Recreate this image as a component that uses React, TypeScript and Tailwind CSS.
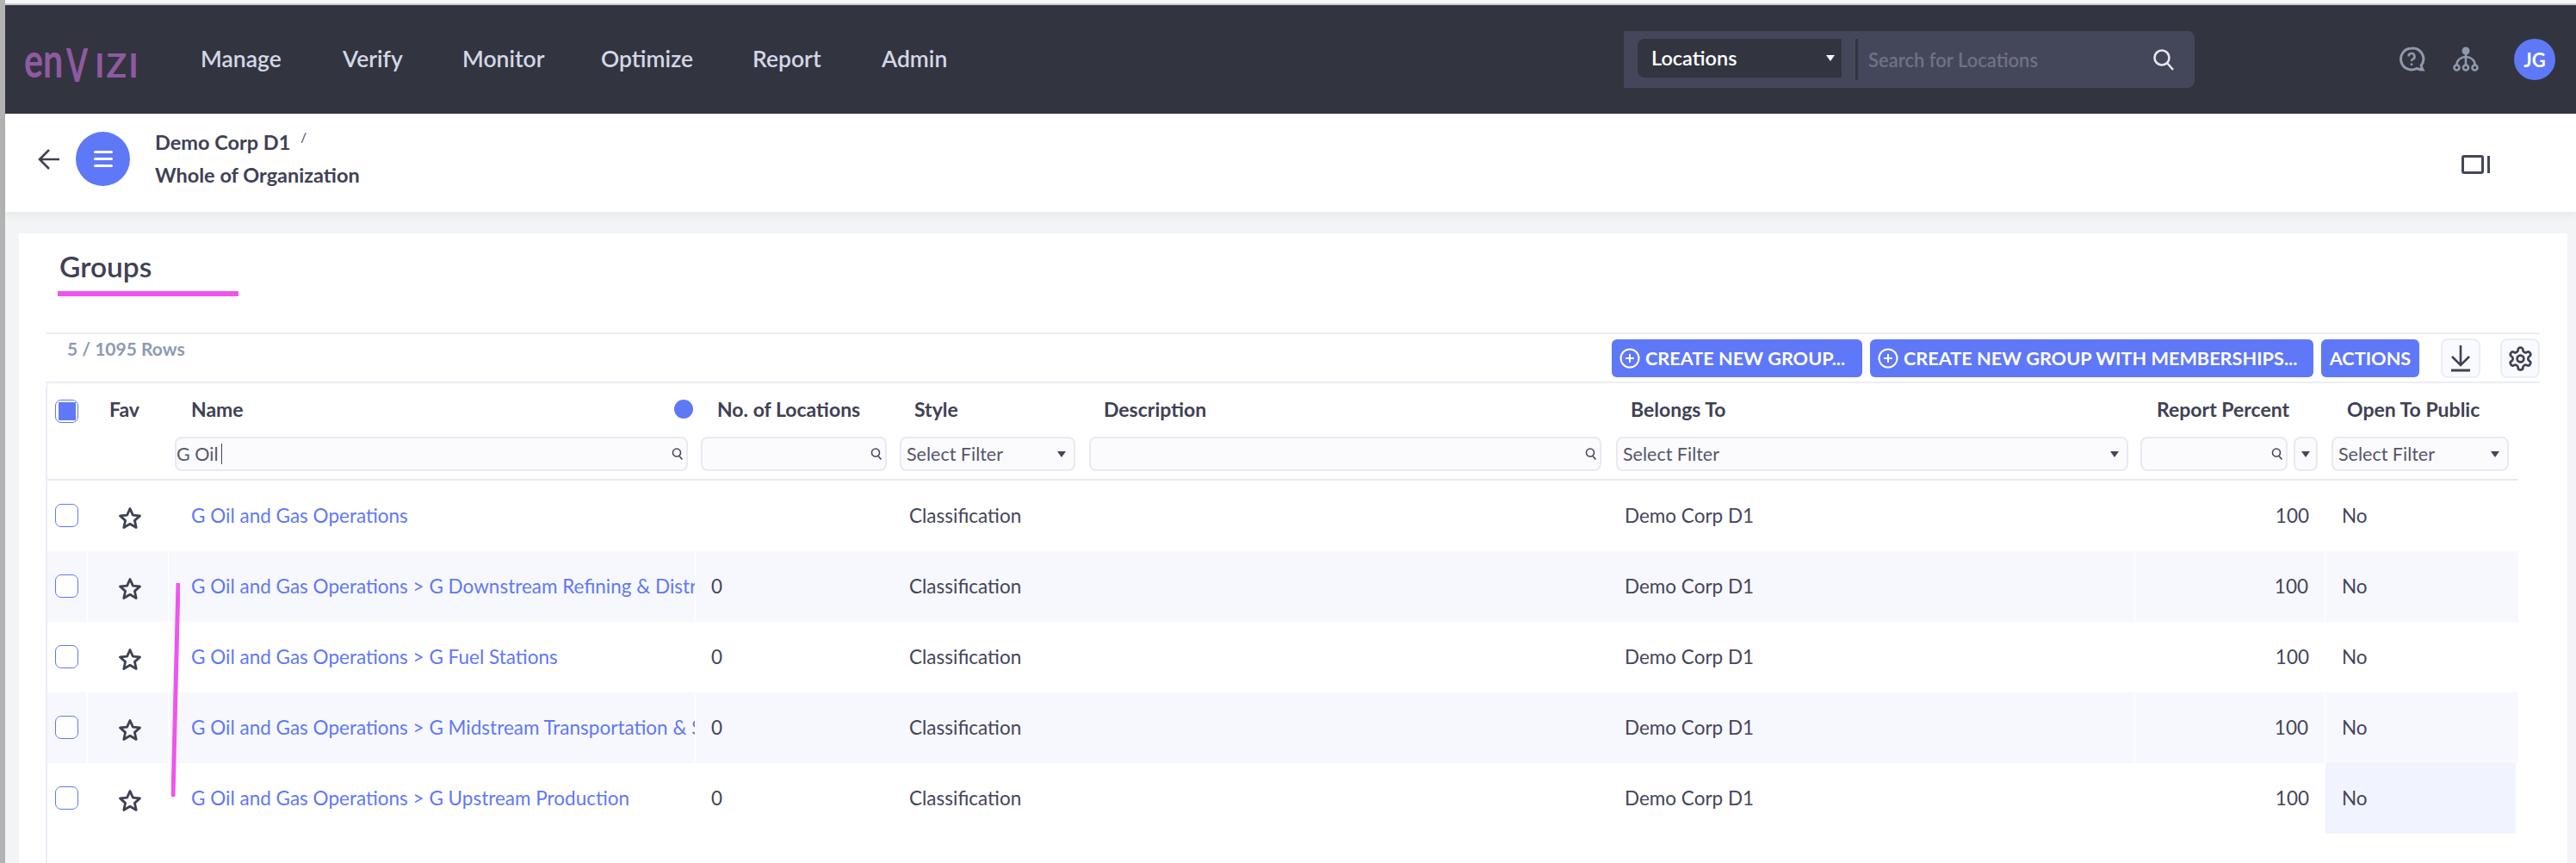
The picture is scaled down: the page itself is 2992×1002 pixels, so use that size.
const gridCols =
  "grid grid-cols-[47px_94px_612px_229px_219px_612px_612px_221px_221px]";

const rows = [
  { name: "G Oil and Gas Operations", locations: "" },
  { name: "G Oil and Gas Operations > G Downstream Refining & Distribution", locations: "0" },
  { name: "G Oil and Gas Operations > G Fuel Stations", locations: "0" },
  { name: "G Oil and Gas Operations > G Midstream Transportation & Storage", locations: "0" },
  { name: "G Oil and Gas Operations > G Upstream Production", locations: "0" },
];

const navItems = [
  { label: "Manage", className: "w-[165px]" },
  { label: "Verify", className: "w-[139px]" },
  { label: "Monitor", className: "w-[161px]" },
  { label: "Optimize", className: "w-[176px]" },
  { label: "Report", className: "w-[150px]" },
  { label: "Admin", className: "w-[80px]" },
];

const MiniSearch = () => (
  <svg width="14" height="16" viewBox="0 0 14 16" fill="none" stroke="#44465a" strokeWidth="1.6">
    <circle cx="6" cy="6.5" r="4.5" />
    <path d="M9 10.5l3.5 4" />
  </svg>
);

const Caret = ({ className = "border-t-[#44465a]" }: { className?: string }) => (
  <span className={`w-0 h-0 border-x-[5px] border-x-transparent border-t-[7px] ${className}`} />
);

const TextFilter = ({ value, className }: { value?: string; className: string }) => (
  <div className={`h-[40px] rounded-lg border-2 border-[#e8e9f3] bg-[#fbfbfe] flex items-center justify-between pr-[3px] ${className}`}>
    <span className="text-[21.5px] text-[#55576a] flex items-center">
      {value}
      {value ? <span className="w-px h-[24px] bg-[#44465a] ml-[4px]" /> : null}
    </span>
    <MiniSearch />
  </div>
);

const SelectFilter = ({ className }: { className: string }) => (
  <div className={`h-[40px] rounded-lg border-2 border-[#e8e9f3] bg-[#fbfbfe] flex items-center justify-between pl-[6px] pr-[9px] ${className}`}>
    <span className="text-[21.5px] text-[#55576a]">Select Filter</span>
    <Caret />
  </div>
);

const Checkbox = ({ checked }: { checked?: boolean }) => (
  <span className={`w-[27px] h-[27px] rounded-[7px] border-[1.5px] border-[#5f78f7] bg-white flex items-center justify-center ${checked ? "mt-[4px]" : "mb-[2px]"}`}>
    {checked ? <span className="w-[20px] h-[21px] bg-[#5f78f7]" /> : null}
  </span>
);

const Star = () => (
  <svg className="mt-[5px]" width="28" height="27" viewBox="0 0 28 27" fill="none" stroke="#3f4154" strokeWidth="2.8" strokeLinejoin="round">
    <path d="M14 2.5l3.4 7.6 8.1.8-6.1 5.5 1.8 8.1L14 20.3l-7.2 4.2 1.8-8.1-6.1-5.5 8.1-.8z" />
  </svg>
);

const PlusCircle = () => (
  <svg width="24" height="24" viewBox="0 0 24 24" fill="none" stroke="white" strokeWidth="2">
    <circle cx="12" cy="12" r="10.5" />
    <path d="M12 7v10M7 12h10" />
  </svg>
);

const Logo = () => (
  <div className="w-[205px] flex items-baseline text-[#8f5aa0] font-bold leading-none">
    <span className="w-[49px] text-[55px] scale-x-[0.75] origin-left">en</span>
    <span className="w-[33px] text-[53px] scale-x-[0.68] origin-left translate-y-[5px]">V</span>
    <span className="text-[39px] tracking-[2px]">IZI</span>
  </div>
);

export default function App() {
  return (
    <div className="w-[2992px] h-[1002px] overflow-hidden flex bg-[#f3f4f6] font-['Lato',sans-serif]">
      <div className="w-[6px] bg-[#b3b3b3]" />
      <div className="flex-1 flex flex-col min-w-0">
        <div className="h-[4px] bg-[#f6f6f8]" />
        <div className="h-[2px] bg-[#c9c9cc]" />

        <header className="h-[126px] bg-[#32343f] flex items-center pl-[22px] pr-[20px]">
          <Logo />
          <nav className="flex items-center text-[#d3d7e6] text-[26.5px] font-semibold">
            {navItems.map((item) => (
              <span key={item.label} className={item.className}>
                {item.label}
              </span>
            ))}
          </nav>
          <div className="ml-[782px] w-[663px] h-[66px] bg-[#444759] rounded-r-lg flex items-center pl-[16px] pr-[23px]">
            <div className="w-[237px] h-[45px] mb-[3px] bg-[#32343f] rounded-l-lg flex items-center justify-between pl-[16px] pr-[8px] text-white text-[23.5px] font-semibold">
              Locations
              <Caret className="border-t-white" />
            </div>
            <div className="w-[3px] h-[48px] bg-[#32343f] ml-[16px]" />
            <span className="ml-[12px] text-[22px] font-semibold text-[#6f7284]">Search for Locations</span>
            <svg className="ml-auto" width="26" height="26" viewBox="0 0 26 26" fill="none" stroke="#e4e6f0" strokeWidth="2.6">
              <circle cx="11" cy="11" r="8.5" />
              <path d="M17 17l7 8" />
            </svg>
          </div>
          <svg className="ml-[238px]" width="30" height="31" viewBox="0 0 30 31" fill="none" stroke="#8f99ad" strokeWidth="3">
            <path d="M14 2a12.5 12.5 0 1 0 6 23.5c2 .8 4.5 1.5 7 1.5-1-1.5-1.5-3-1.8-5A12.5 12.5 0 0 0 14 2z" />
            <path d="M10.5 11.5a3.5 3.5 0 1 1 5 3.2c-1 .6-1.5 1.1-1.5 2.3M14 19.5v2.5" strokeWidth="2.6" />
          </svg>
          <svg className="ml-[32px]" width="30" height="30" viewBox="0 0 30 30" fill="none" stroke="#8f99ad" strokeWidth="2.6">
            <circle cx="15" cy="5" r="4.5" fill="#8f99ad" stroke="none" />
            <path d="M15 8v13M4.5 21a10.5 9 0 0 1 21 0" />
            <circle cx="4.5" cy="24.5" r="3" />
            <circle cx="15" cy="24.5" r="3" />
            <circle cx="25.5" cy="24.5" r="3" />
          </svg>
          <div className="ml-[41px] w-[48px] h-[48px] rounded-full bg-[#5f78f7] flex items-center justify-center text-white text-[22px] font-bold">
            JG
          </div>
        </header>

        <div className="h-[114px] bg-white flex items-center pl-[38px] pr-[100px] pb-[9px] shadow-[0_4px_10px_rgba(0,0,0,0.05)] z-10">
          <svg width="26" height="26" viewBox="0 0 26 26" fill="none" stroke="#3f4154" strokeWidth="2.6">
            <path d="M25 13H3M13 2L2 13l11 11" />
          </svg>
          <div className="ml-[18px] w-[63px] h-[63px] rounded-full bg-[#5f78f7] flex flex-col items-center justify-center gap-[5px]">
            <span className="w-[22px] h-[3px] bg-white rounded" />
            <span className="w-[22px] h-[3px] bg-white rounded" />
            <span className="w-[22px] h-[3px] bg-white rounded" />
          </div>
          <div className="ml-[29px] flex flex-col gap-[3px] text-[#3f4154] text-[23.5px] font-bold">
            <div className="flex">
              Demo Corp D1
              <span className="ml-[12px] text-[15px] font-normal">/</span>
            </div>
            <div>Whole of Organization</div>
          </div>
          <div className="ml-auto mt-[13px] flex items-center gap-[4px]">
            <span className="w-[26px] h-[22px] rounded-[3px] border-[3px] border-[#44465a]" />
            <span className="w-[3px] h-[20px] bg-[#44465a]" />
          </div>
        </div>

        <main className="mt-[25px] ml-[16px] mr-[10px] flex-1 min-h-0 bg-white flex flex-col">
          <div className="pt-[16px] pl-[47px] text-[#3f4154] text-[33.5px] font-semibold leading-[44px]">Groups</div>
          <div className="ml-[45px] mt-[7px] w-[210px] h-[6px] bg-[#ee55f0]" />

          <div className="ml-[31px] mr-[32px] mt-[42px] h-[59px] border-y-2 border-[#eceef5] flex items-start justify-between">
            <span className="ml-[25px] mt-[1px] text-[21px] font-bold text-[#8d9ab3]">5 / 1095 Rows</span>
            <div className="flex items-center gap-[9px] mt-[5px]">
              <button className="h-[44px] w-[291px] rounded-md bg-[#5f78f7] text-white text-[21.7px] font-bold flex items-center gap-[6px] pl-[9px] whitespace-nowrap">
                <PlusCircle />
                CREATE NEW GROUP...
              </button>
              <button className="h-[44px] w-[515px] rounded-md bg-[#5f78f7] text-white text-[21.7px] font-bold flex items-center gap-[6px] pl-[9px] whitespace-nowrap">
                <PlusCircle />
                CREATE NEW GROUP WITH MEMBERSHIPS...
              </button>
              <button className="h-[44px] w-[114px] rounded-md bg-[#5f78f7] text-white text-[21.7px] font-bold">
                ACTIONS
              </button>
              <button className="ml-[16px] w-[46px] h-[46px] rounded-lg border-2 border-[#eceef5] bg-[#f9faff] flex items-center justify-center">
                <svg width="24" height="32" viewBox="0 0 24 32" fill="none" stroke="#3f4154" strokeWidth="2.6">
                  <path d="M12 1v23M2 14l10 10 10-10" />
                  <path d="M1 30h22" strokeWidth="3" />
                </svg>
              </button>
              <button className="ml-[14px] w-[46px] h-[46px] rounded-lg border-2 border-[#eceef5] bg-[#f9faff] flex items-center justify-center">
                <svg width="31" height="31" viewBox="0 0 24 24" fill="none" stroke="#3f4154" strokeWidth="2.1" strokeLinejoin="round">
                  <path d="M12.22 2h-.44a2 2 0 0 0-2 2v.18a2 2 0 0 1-1 1.73l-.43.25a2 2 0 0 1-2 0l-.15-.08a2 2 0 0 0-2.73.73l-.22.38a2 2 0 0 0 .73 2.73l.15.1a2 2 0 0 1 1 1.72v.51a2 2 0 0 1-1 1.74l-.15.09a2 2 0 0 0-.73 2.73l.22.38a2 2 0 0 0 2.73.73l.15-.08a2 2 0 0 1 2 0l.43.25a2 2 0 0 1 1 1.73V20a2 2 0 0 0 2 2h.44a2 2 0 0 0 2-2v-.18a2 2 0 0 1 1-1.73l.43-.25a2 2 0 0 1 2 0l.15.08a2 2 0 0 0 2.73-.73l.22-.39a2 2 0 0 0-.73-2.73l-.15-.08a2 2 0 0 1-1-1.74v-.5a2 2 0 0 1 1-1.74l.15-.09a2 2 0 0 0 .73-2.73l-.22-.38a2 2 0 0 0-2.73-.73l-.15.08a2 2 0 0 1-2 0l-.43-.25a2 2 0 0 1-1-1.73V4a2 2 0 0 0-2-2z" />
                  <circle cx="12" cy="12" r="3" />
                </svg>
              </button>
            </div>
          </div>

          <div className="ml-[31px] mr-[57px] flex-1 border-l-2 border-[#eceef5] rounded-tl-lg -mt-[2px] relative">
            <div className="border-b-2 border-[#e8e9f3] h-[115px]">
              <div className={`${gridCols} h-[64px] items-center text-[23px] font-bold text-[#3f4154]`}>
                <span className="pl-[9px]"><Checkbox checked /></span>
                <span className="pl-[25px]">Fav</span>
                <span className="pl-[26px] flex items-center justify-between pr-[3px]">
                  Name
                  <span className="w-[22px] h-[22px] rounded-full bg-[#5f78f7]" />
                </span>
                <span className="pl-[25px]">No. of Locations</span>
                <span className="pl-[25px]">Style</span>
                <span className="pl-[26px]">Description</span>
                <span className="pl-[26px]">Belongs To</span>
                <span className="pl-[25px]">Report Percent</span>
                <span className="pl-[25px]">Open To Public</span>
              </div>
              <div className={`${gridCols} items-center`}>
                <span />
                <span />
                <span className="pl-[7px] pr-[9px]"><TextFilter value="G Oil" className="w-full" /></span>
                <span className="pl-[6px] pr-[7px]"><TextFilter className="w-full" /></span>
                <span className="pl-[8px] pr-[7px]"><SelectFilter className="w-full" /></span>
                <span className="pl-[9px] pr-[8px]"><TextFilter className="w-full" /></span>
                <span className="pl-[9px] pr-[8px]"><SelectFilter className="w-full" /></span>
                <span className="pl-[6px] pr-[9px] flex gap-[7px]">
                  <TextFilter className="flex-1" />
                  <div className="w-[28px] h-[40px] rounded-lg border-2 border-[#e8e9f3] bg-[#fbfbfe] flex items-center justify-center"><Caret /></div>
                </span>
                <span className="pl-[7px] pr-[8px]"><SelectFilter className="w-full" /></span>
              </div>
            </div>

            {rows.map((row, i) => {
              const sep = i % 2 === 1 ? "border-r border-white" : "";
              return (
                <div
                  key={row.name}
                  className={`${gridCols} h-[82px] items-stretch text-[22.5px] text-[#44465a] ${i % 2 === 1 ? "bg-[#f7f8fe]" : ""}`}
                >
                  <span className={`flex items-center pl-[9px] ${sep}`}><Checkbox /></span>
                  <span className={`flex items-center pl-[35px] ${sep}`}><Star /></span>
                  <span className={`flex items-center pl-[26px] overflow-hidden whitespace-nowrap text-[#5f78f7] ${sep}`}>{row.name}</span>
                  <span className="flex items-center pl-[18px]">{row.locations}</span>
                  <span className="flex items-center pl-[19px]">Classification</span>
                  <span />
                  <span className={`flex items-center pl-[19px] ${sep}`}>Demo Corp D1</span>
                  <span className={`flex items-center justify-end pr-[19px] ${sep}`}>100</span>
                  <span className={`flex items-center pl-[19px] ${i === 4 ? "bg-[#f1f4fe]" : ""}`}>No</span>
                </div>
              );
            })}

            <svg className="absolute left-[144px] top-[234px]" width="10" height="250" viewBox="0 0 10 250" fill="none">
              <path d="M8 0L2 248" stroke="#ee55f0" strokeWidth="5" />
            </svg>
          </div>
        </main>
      </div>
    </div>
  );
}
